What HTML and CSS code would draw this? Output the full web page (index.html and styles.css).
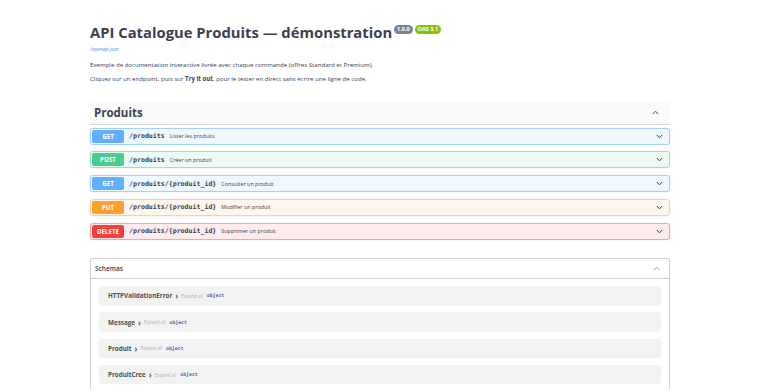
FILE: index.html
```html
<!DOCTYPE html>
<html lang="fr">
<head>
    <meta charset="UTF-8">
    <meta name="viewport" content="width=device-width, initial-scale=1.0">
    <title>API Catalogue Produits</title>
    <link rel="stylesheet" href="styles.css">
</head>
<body>
    <div class="wrapper">
        <div class="info">
            <h2 class="title">API Catalogue Produits — démonstration
                <span class="version-stamp">
                    <small class="version">1.0.0</small>
                    <small class="version oas">OAS 3.1</small>
                </span>
            </h2>
            <a class="spec-link" href="#">/openapi.json</a>
            <p class="desc">Exemple de documentation interactive livrée avec chaque commande (offres Standard et Premium).</p>
            <p class="desc">Cliquez sur un endpoint, puis sur <strong>Try it out</strong>, pour le tester en direct sans écrire une ligne de code.</p>
        </div>

        <div class="tag-section">
            <h3 class="tag-header">
                <span>Produits</span>
                <svg class="arrow" width="7" height="5" viewBox="0 0 7 5"><path d="M0.8 4 L3.5 1.2 L6.2 4" fill="none" stroke="#3b4151" stroke-width="1"/></svg>
            </h3>

            <div class="opblock get">
                <span class="method">GET</span>
                <span class="path">/produits</span>
                <span class="summary">Lister les produits</span>
                <svg class="chev" width="7" height="5" viewBox="0 0 7 5"><path d="M0.8 1 L3.5 3.8 L6.2 1" fill="none" stroke="#3b4151" stroke-width="1"/></svg>
            </div>
            <div class="opblock post">
                <span class="method">POST</span>
                <span class="path">/produits</span>
                <span class="summary">Créer un produit</span>
                <svg class="chev" width="7" height="5" viewBox="0 0 7 5"><path d="M0.8 1 L3.5 3.8 L6.2 1" fill="none" stroke="#3b4151" stroke-width="1"/></svg>
            </div>
            <div class="opblock get">
                <span class="method">GET</span>
                <span class="path">/produits/{produit_id}</span>
                <span class="summary">Consulter un produit</span>
                <svg class="chev" width="7" height="5" viewBox="0 0 7 5"><path d="M0.8 1 L3.5 3.8 L6.2 1" fill="none" stroke="#3b4151" stroke-width="1"/></svg>
            </div>
            <div class="opblock put">
                <span class="method">PUT</span>
                <span class="path">/produits/{produit_id}</span>
                <span class="summary">Modifier un produit</span>
                <svg class="chev" width="7" height="5" viewBox="0 0 7 5"><path d="M0.8 1 L3.5 3.8 L6.2 1" fill="none" stroke="#3b4151" stroke-width="1"/></svg>
            </div>
            <div class="opblock delete">
                <span class="method">DELETE</span>
                <span class="path">/produits/{produit_id}</span>
                <span class="summary">Supprimer un produit</span>
                <svg class="chev" width="7" height="5" viewBox="0 0 7 5"><path d="M0.8 1 L3.5 3.8 L6.2 1" fill="none" stroke="#3b4151" stroke-width="1"/></svg>
            </div>
        </div>

        <section class="models">
            <h4 class="models-header">
                <span>Schemas</span>
                <svg class="arrow" width="7" height="5" viewBox="0 0 7 5"><path d="M0.8 4 L3.5 1.2 L6.2 4" fill="none" stroke="#8a8f99" stroke-width="0.9"/></svg>
            </h4>
            <div class="model-list">
                <div class="model-row"><span class="model-name">HTTPValidationError</span><span class="toggle">›</span><span class="expand">Expand all</span><span class="type">object</span></div>
                <div class="model-row"><span class="model-name">Message</span><span class="toggle">›</span><span class="expand">Expand all</span><span class="type">object</span></div>
                <div class="model-row"><span class="model-name">Produit</span><span class="toggle">›</span><span class="expand">Expand all</span><span class="type">object</span></div>
                <div class="model-row"><span class="model-name">ProduitCree</span><span class="toggle">›</span><span class="expand">Expand all</span><span class="type">object</span></div>
            </div>
        </section>
    </div>
</body>
</html>
```

FILE: styles.css
```css
body {
    margin: 0;
    background: #ffffff;
    font-family: 'Open Sans', 'Noto Sans', sans-serif;
    color: #3b4151;
}
.wrapper {
    width: 580px;
    margin-left: 90px;
}
.info {
    padding-top: 22px;
}
.title {
    margin: 0;
    font-size: 14.8px;
    font-weight: 700;
    line-height: 20px;
    color: #3b4151;
}
.version-stamp {
    display: inline-flex;
    gap: 2px;
    vertical-align: top;
    margin-top: 3px;
    margin-left: -2px;
}
.version {
    background: #7d8492;
    color: #ffffff;
    font-size: 5.5px;
    font-weight: 700;
    border-radius: 5px;
    padding: 1px 3px;
    line-height: 7px;
}
.version.oas {
    background: #89bf04;
}
.spec-link {
    display: block;
    margin-top: 4px;
    font-size: 4.5px;
    color: #4990e2;
    text-decoration: none;
}
.desc {
    margin: 9px 0 0;
    font-size: 6.1px;
    line-height: 8px;
}
.desc + .desc {
    margin-top: 5.5px;
}
.tag-section {
    margin-top: 19px;
}
.tag-header {
    display: flex;
    align-items: center;
    justify-content: space-between;
    margin: 0 0 3px;
    height: 22px;
    padding: 0 11px 0 4px;
    background: #fafafa;
    border-bottom: 1px solid rgba(59, 65, 81, 0.2);
    font-size: 11.5px;
    font-weight: 700;
}
.opblock {
    display: flex;
    align-items: center;
    height: 17px;
    box-sizing: border-box;
    margin-bottom: 6.75px;
    padding: 0 6px 0 1px;
    border: 1px solid;
    border-radius: 3px;
    box-shadow: 0 0 2px rgba(0, 0, 0, 0.12);
}
.method {
    width: 32px;
    height: 13px;
    line-height: 13px;
    border-radius: 2px;
    text-align: center;
    color: #ffffff;
    font-size: 6.2px;
    font-weight: 700;
    margin-right: 5px;
}
.path {
    font-family: 'DejaVu Sans Mono', monospace;
    font-weight: 700;
    font-size: 6.6px;
    margin-right: 5px;
}
.summary {
    flex: 1;
    font-size: 5.4px;
}
.opblock.get {
    background: #eff7ff;
    border-color: #a6d0fc;
}
.opblock.get .method {
    background: #61affe;
}
.opblock.post {
    background: #edfaf4;
    border-color: #9ee0c0;
}
.opblock.post .method {
    background: #49cc90;
}
.opblock.put {
    background: #fff5ea;
    border-color: #fcd29c;
}
.opblock.put .method {
    background: #fca130;
}
.opblock.delete {
    background: #feecec;
    border-color: #f9a3a3;
}
.opblock.delete .method {
    background: #f93e3e;
}
.models {
    margin-top: 18px;
    border: 1px solid rgba(59, 65, 81, 0.25);
    border-radius: 3px;
    border-bottom: none;
}
.models-header {
    display: flex;
    align-items: center;
    justify-content: space-between;
    margin: 0;
    height: 19px;
    padding: 0 9px 0 4px;
    border-bottom: 1px solid rgba(59, 65, 81, 0.25);
    font-size: 6.5px;
    font-weight: 600;
}
.model-list {
    padding: 7.5px 8px 6px;
    display: flex;
    flex-direction: column;
    gap: 6.8px;
}
.model-row {
    display: flex;
    align-items: center;
    height: 19.5px;
    padding-left: 9px;
    background: #f2f2f2;
    border-radius: 3px;
}
.model-name {
    font-size: 6.3px;
    font-weight: 700;
    color: #505050;
}
.toggle {
    font-size: 8px;
    font-weight: 700;
    margin: 0 3px 0 3px;
    color: #505050;
}
.expand {
    font-size: 4.5px;
    color: #b0b0b0;
    margin-right: 4px;
}
.type {
    font-family: 'DejaVu Sans Mono', monospace;
    font-weight: 700;
    font-size: 4.8px;
    color: #55a;
}
```
